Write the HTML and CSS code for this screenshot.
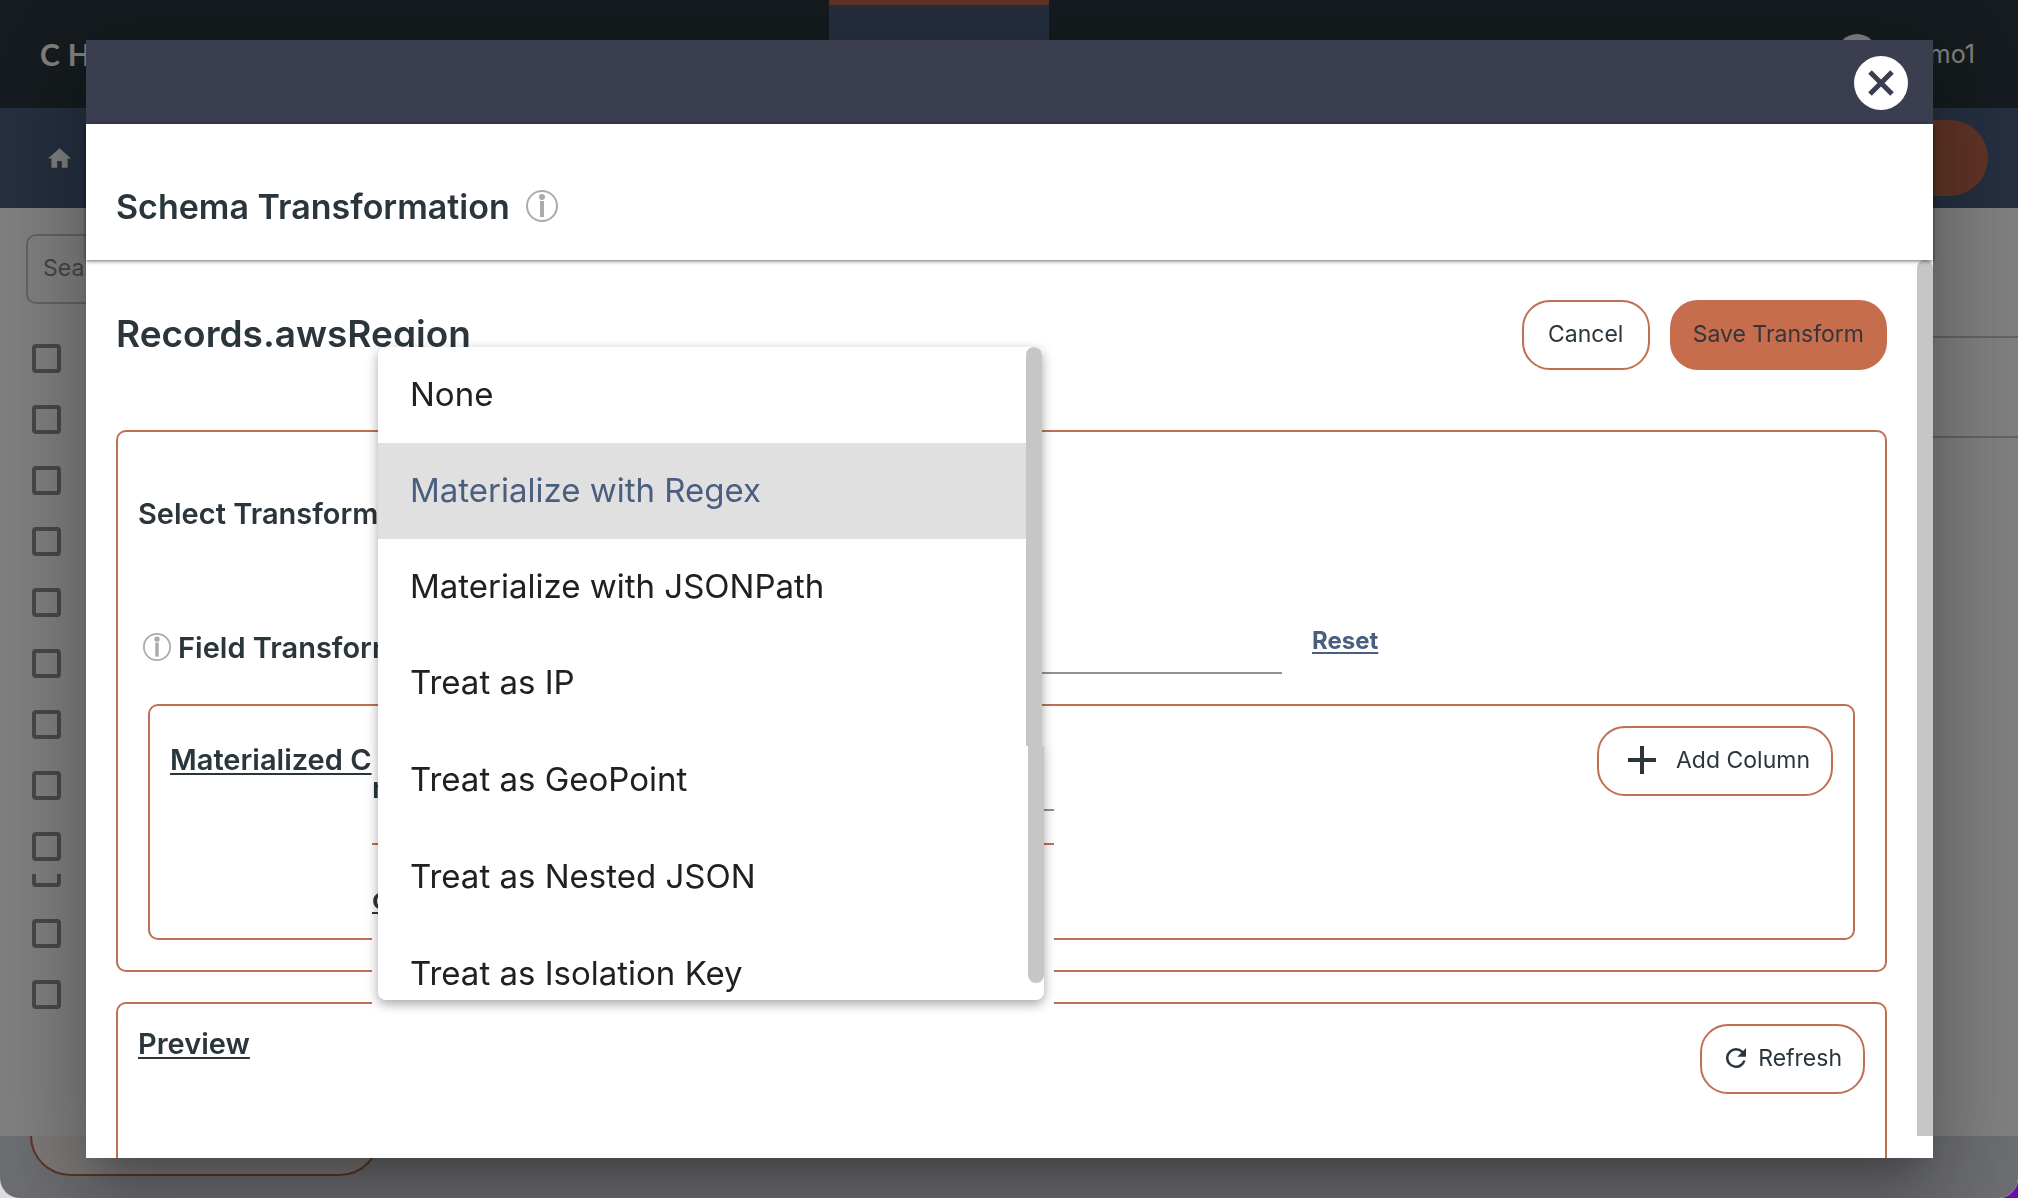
FILE: index.html
```html
<!DOCTYPE html>
<html lang="en">
<head>
<meta charset="utf-8">
<title>Schema Transformation</title>
<link rel="stylesheet" href="styles.css">
</head>
<body>
<div class="app">
  <header class="topbar">
    <div class="logo"><span>C</span><span>H</span></div>
    <div class="tab"></div>
    <div class="user"><span class="avatar"></span>demo1</div>
  </header>
  <nav class="subbar">
    <a href="#" class="home" aria-label="Home"><svg viewBox="2 3 20 17" width="23" height="20"><path d="M10 20v-6h4v6h5v-8h3L12 3 2 12h3v8z"/></svg></a>
    <button class="subbar-action" aria-label="Create"></button>
  </nav>
  <main class="page">
    <aside class="sidebar">
      <input class="search" type="text" placeholder="Search" aria-label="Search">
      <div class="checks">
        <input type="checkbox" aria-label="Row 1"><input type="checkbox" aria-label="Row 2"><input type="checkbox" aria-label="Row 3"><input type="checkbox" aria-label="Row 4"><input type="checkbox" aria-label="Row 5"><input type="checkbox" aria-label="Row 6"><input type="checkbox" aria-label="Row 7"><input type="checkbox" aria-label="Row 8"><input type="checkbox" aria-label="Row 9">
        <div class="cut"><input type="checkbox" aria-label="Row 10"></div>
        <input type="checkbox" aria-label="Row 11"><input type="checkbox" aria-label="Row 12">
      </div>
    </aside>
    <div class="rows"><div class="line"></div><div class="line"></div></div>
  </main>
  <footer class="footer"><button class="footer-action" aria-label="Back"></button></footer>
</div>

<div class="overlay">
  <section class="dialog" role="dialog" aria-labelledby="dialog-title">
    <div class="dialog-bar">
      <button class="close" aria-label="Close"><svg viewBox="0 0 26 26" width="26" height="26"><path d="M2 2l22 22M24 2L2 24"/></svg></button>
    </div>
    <div class="dialog-title">
      <h1 id="dialog-title">Schema Transformation</h1>
      <svg class="info" viewBox="0 0 32 32" width="32" height="32"><circle cx="16" cy="16" r="15"/><path d="M14 11h4v16h-4z"/><circle class="dot" cx="16" cy="7" r="3"/></svg>
    </div>
    <div class="dialog-body">
      <div class="content">
        <div class="record">
          <h2>Records.awsRegion</h2>
          <div class="actions">
            <button class="btn cancel">Cancel</button>
            <button class="btn primary">Save Transform</button>
          </div>
        </div>
        <div class="panel">
          <div class="select-row"><span class="label">Select Transform</span></div>
          <div class="field-row">
            <svg class="info" viewBox="0 0 32 32" width="28" height="28"><circle cx="16" cy="16" r="15"/><path d="M14 11h4v16h-4z"/><circle class="dot" cx="16" cy="7" r="3"/></svg>
            <label class="label field-label" for="field">Field Transform</label>
            <div class="field">
              <input id="field" type="text">
              <a href="#" class="reset">Reset</a>
            </div>
          </div>
          <div class="panel inner">
            <h3>Materialized C</h3>
            <button class="btn add"><svg viewBox="0 0 28 28" width="28" height="28"><path d="M12 0h4v12h12v4H16v12h-4V16H0v-4h12z"/></svg>Add Column</button>
          </div>
        </div>
        <div class="panel preview">
          <h3>Preview</h3>
          <button class="btn refresh"><svg viewBox="4 4 16 16" width="20" height="20"><path d="M17.65 6.35A7.96 7.96 0 0 0 12 4a8 8 0 1 0 7.73 10h-2.08A6 6 0 1 1 12 6c1.66 0 3.14.69 4.22 1.78L13 11h7V4z"/></svg>Refresh</button>
        </div>
      </div>
      <div class="scrollbar"></div>
    </div>
    <div class="patch">
      <span class="fragment name">r</span>
      <span class="rule grey"></span>
      <span class="rule orange"></span>
      <span class="fragment link">c</span>
    </div>
    <div class="menu">
      <div class="menu-part upper">
        <ul role="listbox" aria-label="Transform">
          <li role="option">None</li>
          <li role="option" class="selected" aria-selected="true">Materialize with Regex</li>
          <li role="option">Materialize with JSONPath</li>
          <li role="option">Treat as IP</li>
        </ul>
        <div class="thumb"></div>
      </div>
      <div class="menu-part lower">
        <ul role="listbox" aria-label="More transforms">
          <li role="option">Treat as GeoPoint</li>
          <li role="option">Treat as Nested JSON</li>
          <li role="option">Treat as Isolation Key</li>
        </ul>
        <div class="thumb"></div>
      </div>
    </div>
  </section>
</div>
</body>
</html>
```
FILE: styles.css
```css
* { box-sizing: border-box; margin: 0; padding: 0; }
:root { --ink: #2a363c; --navy: #4a5e80; --rust: #bf7052; }
html { height: 100%; background: linear-gradient(90deg, #dcdcdc 50%, #6a0db0 50%); }
body { height: 100%; font-family: Inter, "Open Sans", sans-serif; color: var(--ink); overflow: hidden; }
button { font: inherit; color: inherit; border: 0; background: none; }
h1, h2, h3, .label { font-weight: 600; }

/* Application behind the dialog */
.app { height: 100%; display: flex; flex-direction: column; background: #fff; border-radius: 0 0 20px 20px; overflow: hidden; }
.topbar { flex: none; height: 108px; padding: 0 43px 0 40px; display: grid; grid-template-columns: 789fr 220fr 926fr; align-items: center; background: #2a363c; color: #fff; }
.logo { display: flex; gap: 8px; font-family: Lato, sans-serif; font-size: 30px; font-weight: 700; }
.tab { align-self: stretch; border-top: 5px solid #c0684c; background: #4a5c7a; }
.user { display: flex; justify-content: flex-end; align-items: center; gap: 22px; font-size: 25px; }
.avatar { width: 40px; height: 40px; border-radius: 50%; background: #fff; }
.subbar { flex: none; height: 100px; padding: 0 30px 0 48px; display: flex; align-items: center; justify-content: space-between; background: #4a5e7e; }
.home svg { display: block; fill: #fff; }
.subbar-action { width: 220px; height: 76px; border-radius: 38px; background: #c0684c; }
.page { flex: 1; min-height: 0; display: flex; }
.sidebar { width: 380px; padding: 26px; }
.search { width: 100%; height: 70px; padding: 0 15px 2px; border: 2px solid #c4c6d2; border-radius: 10px; background: none; font: inherit; font-size: 23px; }
.search::placeholder { color: #8c8c8c; opacity: 1; }
.checks { padding: 40px 0 0 6px; display: flex; flex-direction: column; gap: 32px; }
.checks input { appearance: none; flex: none; display: block; width: 29px; height: 29px; border: 4px solid #8f8f8f; border-radius: 4px; }
.cut { height: 13px; margin-top: -19px; display: flex; align-items: flex-end; overflow: hidden; }
.rows { flex: 1; padding-top: 128px; display: flex; flex-direction: column; gap: 98px; }
.line { height: 2px; background: #c4c6d2; }
.footer { flex: none; height: 62px; padding-left: 30px; background: #d8dae2; }
.footer-action { display: block; width: 350px; height: 40px; border: 2px solid #c0684c; border-top: 0; border-radius: 0 0 40px 40px; background: #f8f4f0; }

/* Dialog */
.overlay { position: fixed; inset: 0; padding: 40px 85px 40px 86px; display: flex; background: rgba(0, 0, 0, .5); border-radius: 0 0 20px 20px; overflow: hidden; }
.dialog { position: relative; flex: 1; min-width: 0; display: flex; flex-direction: column; background: #fff; box-shadow: 0 22px 30px -14px rgba(0, 0, 0, .2), 0 48px 76px 6px rgba(0, 0, 0, .18), 0 18px 92px 16px rgba(0, 0, 0, .14); }
.dialog-bar { flex: none; height: 84px; padding: 2px 25px 0; display: flex; align-items: center; justify-content: flex-end; background: #3a3e4f; }
.close { width: 54px; height: 54px; border-radius: 50%; background: #fff; display: flex; align-items: center; justify-content: center; }
.close svg { fill: none; stroke: #3a3e4f; stroke-width: 5; }
.dialog-title { position: relative; flex: none; height: 136px; padding: 28px 30px 0; display: flex; align-items: center; gap: 16px; box-shadow: 0 1px 4px rgba(0, 0, 0, .6); background: #fff; }
h1 { font-size: 34px; }
.info { flex: none; fill: none; stroke: #a8acae; stroke-width: 2; }
.info path, .info .dot { fill: #a8acae; stroke: none; }
.dialog-body { flex: 1; min-height: 0; display: flex; overflow: hidden; }
.content { flex: 1; padding: 40px 30px 0; }
.scrollbar { flex: none; width: 16px; margin-bottom: 22px; border-radius: 8px 8px 0 0; background: #c6c6c6; }
.record { display: flex; justify-content: space-between; align-items: center; margin-bottom: 60px; }
h2 { font-size: 37px; padding-bottom: 4px; }
.actions { display: flex; gap: 20px; }
.btn { height: 70px; padding: 0 21px 2px; border: 2px solid var(--rust); border-radius: 28px; display: flex; align-items: center; justify-content: center; font-size: 23px; white-space: nowrap; }
.btn svg { fill: var(--ink); }
.cancel { min-width: 128px; }
.primary { background: #c66d4d; border-color: #c66d4d; color: #37343a; }
.panel { border: 2px solid var(--rust); border-radius: 10px; }
.label, h3 { font-size: 29px; white-space: nowrap; }
.select-row { height: 162px; padding: 0 20px; display: flex; align-items: center; }
.field-row { height: 106px; margin-bottom: 4px; padding: 0 25px; display: flex; align-items: center; gap: 7px; }
.field-label { width: 220px; }
.field { display: flex; align-items: flex-start; gap: 30px; flex: 1; }
.field input { width: 877px; height: 54px; border: 0; border-bottom: 2px solid #909090; background: none; font: inherit; font-size: 24px; }
.reset { color: var(--navy); font-size: 24px; line-height: 42px; font-weight: 700; text-underline-offset: 3px; }
.inner { margin: 0 30px 30px; min-height: 236px; padding: 20px; display: flex; justify-content: space-between; align-items: flex-start; }
h3 { text-decoration: underline; text-decoration-thickness: 2px; text-underline-offset: 3px; }
.inner h3 { line-height: 68px; }
.add { padding-left: 29px; gap: 20px; }
.preview { margin-top: 30px; padding: 20px; min-height: 320px; display: flex; justify-content: space-between; align-items: flex-start; }
.preview h3 { line-height: 40px; }
.refresh { padding-left: 24px; gap: 12px; }

/* Open drop-down */
.patch { position: absolute; left: 286px; top: 706px; width: 682px; height: 264px; background: #fff; overflow: hidden; }
.rule { position: absolute; left: 0; right: 0; height: 2px; }
.grey { top: 63px; left: 300px; background: #909090; }
.orange { top: 97px; background: var(--rust); }
.fragment { position: absolute; left: 0; font-size: 29px; line-height: 34px; font-weight: 600; }
.name { top: 25px; }
.link { top: 136px; text-decoration: underline; text-underline-offset: 3px; }
.menu { position: absolute; left: 292px; top: 307px; width: 666px; border-radius: 8px; filter: drop-shadow(0 4px 6px rgba(0, 0, 0, .35)); }
.menu-part { display: flex; background: #fff; overflow: hidden; }
.upper { height: 399px; width: 664px; border-radius: 8px 8px 0 0; }
.lower { height: 254px; border-radius: 0 0 8px 8px; }
.menu ul { flex: 1; list-style: none; }
.menu li { height: 96px; padding: 0 0 2px 32px; display: flex; align-items: center; font-size: 33px; color: #202020; }
.menu .selected { background: #e0e0e0; color: var(--navy); }
.menu .lower ul { margin-top: -15px; }
.menu .lower li { height: 97px; }
.thumb { flex: none; width: 16px; background: #c6c6c6; }
.upper .thumb { border-radius: 8px 8px 0 0; }
.lower .thumb { height: 237px; border-radius: 0 0 8px 8px; }
```
